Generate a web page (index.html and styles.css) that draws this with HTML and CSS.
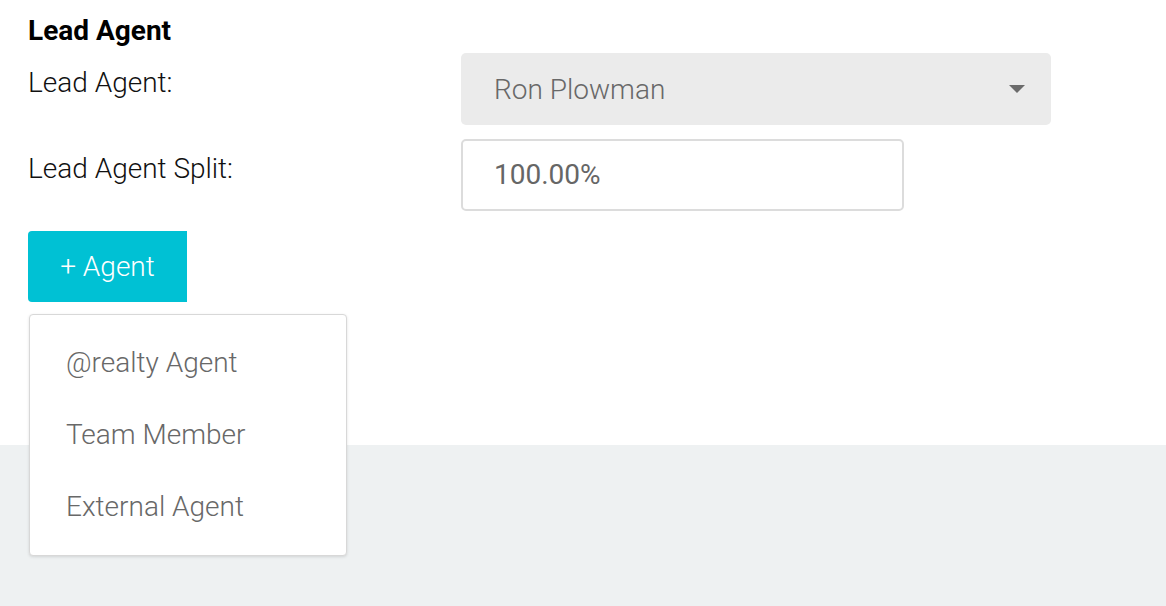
FILE: index.html
```html
<!DOCTYPE html>
<html>
<head>
<meta charset="utf-8">
<link rel="stylesheet" href="styles.css">
</head>
<body>
<div class="page">
  <section class="form">
    <h2 class="title">Lead Agent</h2>
    <div class="row row-first">
      <label class="label">Lead Agent:</label>
      <div class="select">
        <span class="select-value">Ron Plowman</span>
        <svg class="caret" width="16" height="8" viewBox="0 0 16 8"><path d="M0 0 H16 L8 8 Z" fill="#6b6b6b"/></svg>
      </div>
    </div>
    <div class="row row-second">
      <label class="label">Lead Agent Split:</label>
      <div class="input">100.00%</div>
    </div>
    <div class="add-wrap">
      <button class="add-btn">+ Agent</button>
      <ul class="menu">
        <li class="menu-item">@realty Agent</li>
        <li class="menu-item">Team Member</li>
        <li class="menu-item">External Agent</li>
      </ul>
    </div>
  </section>
  <section class="footer"></section>
</div>
</body>
</html>
```

FILE: styles.css
```css
* { box-sizing: border-box; }
html, body { margin: 0; padding: 0; }
body {
  font-family: Roboto, "Liberation Sans", sans-serif;
  background: #fff;
  width: 1166px;
  height: 606px;
  overflow: hidden;
}
.page { display: flex; flex-direction: column; height: 606px; }
.form {
  height: 445px;
  padding: 13px 0 0 28px;
  position: relative;
  z-index: 2;
}
.title {
  margin: 0;
  font-size: 28px;
  font-weight: 700;
  color: #000;
  line-height: 36px;
}
.row { display: flex; align-items: flex-start; }
.row-first { margin-top: 4px; }
.row-second { margin-top: 14px; }
.label {
  width: 433px;
  font-size: 28px;
  font-weight: 300;
  color: #111;
  line-height: 36px;
  padding-top: 11.5px;
}
.select {
  width: 590px;
  height: 72px;
  background: #ebebeb;
  border-radius: 5px;
  display: flex;
  align-items: center;
  justify-content: space-between;
  padding: 0 26px 0 33px;
}
.select-value {
  font-size: 28px;
  font-weight: 300;
  color: #686868;
}
.input {
  width: 443px;
  height: 72px;
  border: 2px solid #dcdcdc;
  border-radius: 5px;
  display: flex;
  align-items: center;
  padding: 0 0 2px 31px;
  font-size: 28px;
  font-weight: 400;
  color: #666;
}
.add-wrap { position: relative; margin-top: 20px; }
.add-btn {
  display: block;
  width: 159px;
  height: 71px;
  border: 0;
  background: #00c1d4;
  color: #fff;
  border-radius: 4px 0 0 4px;
  font-family: Roboto, "Liberation Sans", sans-serif;
  font-size: 28px;
  font-weight: 300;
  padding: 0;
  text-align: center;
}
.menu {
  position: absolute;
  left: 1px;
  top: 83px;
  width: 318px;
  margin: 0;
  padding: 12px 0;
  list-style: none;
  background: #fff;
  border: 1px solid #d8d8d8;
  border-radius: 4px;
  box-shadow: 0 1px 3px rgba(0,0,0,0.12);
}
.menu-item {
  height: 72px;
  line-height: 72px;
  padding-left: 36px;
  font-size: 28px;
  font-weight: 300;
  color: #686868;
}
.footer {
  flex: 1;
  background: #eef1f2;
}
```
